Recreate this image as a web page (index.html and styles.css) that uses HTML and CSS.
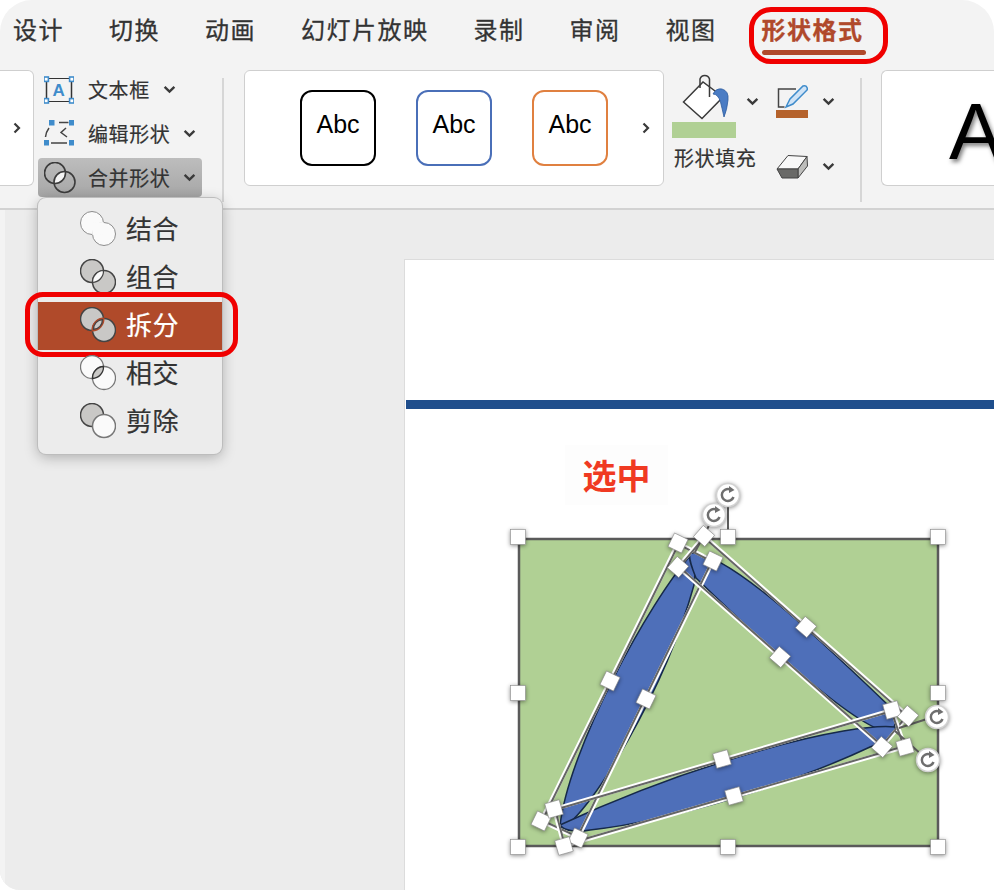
FILE: index.html
```html
<!DOCTYPE html>
<html lang="zh-CN">
<head>
    <meta charset="UTF-8">
    <title>形状格式</title>
    <link rel="stylesheet" href="styles.css">
</head>
<body>

<svg class="defs" width="0" height="0">
    <defs>
        <symbol id="chev" viewBox="0 0 12 8"><path d="M1.5 1.5 L6 6 L10.5 1.5" fill="none" stroke="#3a3a3a" stroke-width="2.2"/></symbol>
        <symbol id="chev-r" viewBox="0 0 8 12"><path d="M1.5 1.5 L6 6 L1.5 10.5" fill="none" stroke="#3a3a3a" stroke-width="2.2"/></symbol>
        <g id="sq"><rect x="-7.5" y="-7.5" width="15" height="15" fill="#fff" stroke="#8a8a8a" stroke-width=".6"/></g>
        <g id="rot">
            <circle r="11.5" fill="#fff" stroke="#d2d2d2" stroke-width="1.5"/>
            <path d="M5.5 2 A6 6 0 1 1 2 -5.6" fill="none" stroke="#6e6e6e" stroke-width="2.5"/>
            <path d="M1 -9 L6.5 -5 L1 -2 Z" fill="#6e6e6e"/>
        </g>
        <path id="lens" d="M12.51 23.48 A11.5 11.5 0 0 1 23.49 11.52 A11.5 11.5 0 0 1 12.51 23.48 Z"/>
    </defs>
</svg>

<div class="window">
    <nav class="tabs">
        <div class="tab">设计</div>
        <div class="tab">切换</div>
        <div class="tab">动画</div>
        <div class="tab">幻灯片放映</div>
        <div class="tab">录制</div>
        <div class="tab">审阅</div>
        <div class="tab">视图</div>
        <div class="tab active">形状格式</div>
    </nav>

    <div class="ribbon">
        <div class="card left-card">
            <svg class="chev-r"><use href="#chev-r"/></svg>
        </div>

        <div class="tools">
            <div class="tool">
                <svg class="tool-icon" viewBox="45 75 30 30">
                    <path d="M47.5 79 V101 M72.5 79 V101" stroke="#333" stroke-width="1.5"/>
                    <path d="M47 78.5 H73 M47 101.5 H73" stroke="#333" stroke-width="1"/>
                    <g fill="#fff" stroke="#3f8ccb" stroke-width="1.6">
                        <rect x="45" y="77" width="4.4" height="4.4"/>
                        <rect x="70.6" y="77" width="4.4" height="4.4"/>
                        <rect x="45" y="98.6" width="4.4" height="4.4"/>
                        <rect x="70.6" y="98.6" width="4.4" height="4.4"/>
                    </g>
                    <text x="60" y="96" text-anchor="middle" class="icon-a">A</text>
                </svg>
                <span>文本框</span>
                <svg class="chev"><use href="#chev"/></svg>
            </div>
            <div class="tool">
                <svg class="tool-icon" viewBox="45 119 30 30">
                    <g fill="#3f8ccb">
                        <rect x="50" y="120" width="5.5" height="5.5"/>
                        <rect x="70" y="120" width="5.5" height="5.5"/>
                        <rect x="44.5" y="140" width="5.5" height="5.5"/>
                        <rect x="70" y="140" width="5.5" height="5.5"/>
                    </g>
                    <path d="M60 122.5 H69.500 M67 128 L62 132.500 L68 137 M52 143 H68 M46.500 137 Q47 132 50 128" fill="none" stroke="#444" stroke-width="1.5"/>
                </svg>
                <span>编辑形状</span>
                <svg class="chev"><use href="#chev"/></svg>
            </div>
            <div class="tool selected">
                <svg class="tool-icon merge-icon" viewBox="0 0 32 32">
                    <path d="M10.1 21.46 A10.5 10.5 0 0 1 21.4 9.54 A10.5 10.5 0 0 1 10.1 21.46 Z" fill="#f4f4f4"/>
                    <circle cx="11" cy="11" r="10.500" fill="none" stroke="#3c3c3c" stroke-width="1.600"/>
                    <circle cx="20.500" cy="20" r="10.500" fill="none" stroke="#3c3c3c" stroke-width="1.600"/>
                </svg>
                <span>合并形状</span>
                <svg class="chev"><use href="#chev"/></svg>

                <div class="menu">
                    <div class="menu-item">
                        <svg class="menu-icon" viewBox="0 0 36 36">
                            <circle cx="12" cy="12" r="11.500" fill="#fafafa" stroke="#8c8c8c"/>
                            <circle cx="24" cy="23" r="11.500" fill="#fafafa" stroke="#8c8c8c"/>
                            <use href="#lens" fill="#fafafa"/>
                            <path d="M12 18 L24 17" stroke="#fafafa" stroke-width="12"/>
                        </svg>
                        <span>结合</span>
                    </div>
                    <div class="menu-item">
                        <svg class="menu-icon" viewBox="0 0 36 36">
                            <circle cx="12" cy="12" r="11.500" fill="#c9c8c6" stroke="#444" stroke-width="1.500"/>
                            <circle cx="24" cy="23" r="11.500" fill="#c9c8c6" stroke="#444" stroke-width="1.500"/>
                            <use href="#lens" fill="#fafafa" stroke="#444" stroke-width="1.200"/>
                        </svg>
                        <span>组合</span>
                    </div>
                    <div class="menu-item current">
                        <svg class="menu-icon" viewBox="0 0 36 36">
                            <circle cx="12" cy="12" r="11.500" fill="#c9c8c6" stroke="#444" stroke-width="1.500"/>
                            <circle cx="24" cy="23" r="11.500" fill="#c9c8c6" stroke="#444" stroke-width="1.500"/>
                            <use href="#lens" fill="#b04a2a" stroke="#b04a2a" stroke-width="2"/>
                            <use href="#lens" transform="translate(18 17.500) scale(.8) translate(-18 -17.500)" fill="#c9c8c6" stroke="#444" stroke-width="1.600"/>
                        </svg>
                        <span>拆分</span>
                    </div>
                    <div class="menu-item">
                        <svg class="menu-icon" viewBox="0 0 36 36">
                            <circle cx="12" cy="12" r="11.500" fill="#fafafa" stroke="#777" stroke-width="1.300"/>
                            <circle cx="24" cy="23" r="11.500" fill="#fafafa" stroke="#777" stroke-width="1.300"/>
                            <use href="#lens" fill="#c9c8c6" stroke="#333" stroke-width="1.300"/>
                        </svg>
                        <span>相交</span>
                    </div>
                    <div class="menu-item">
                        <svg class="menu-icon" viewBox="0 0 36 36">
                            <circle cx="12" cy="12" r="11.500" fill="#c9c8c6" stroke="#444" stroke-width="1.500"/>
                            <circle cx="24" cy="23" r="11.500" fill="#fafafa" stroke="#777" stroke-width="1.500"/>
                        </svg>
                        <span>剪除</span>
                    </div>
                </div>
            </div>
        </div>

        <div class="sep sep-a"></div>

        <div class="card gallery">
            <div class="abc abc-black">Abc</div>
            <div class="abc abc-blue">Abc</div>
            <div class="abc abc-orange">Abc</div>
            <svg class="chev-r gallery-next"><use href="#chev-r"/></svg>
        </div>

        <div class="fill">
            <div class="fill-top">
                <svg class="bucket" viewBox="680 72 50 48">
                    <path d="M683.500 102 L703 82 L723 97 L702 118.500 Z" fill="#fff" stroke="#3a3a3a" stroke-width="1.500"/>
                    <path d="M700 88 V79 A5 5 0 0 1 709.500 79 V97" fill="none" stroke="#3a3a3a" stroke-width="1.500"/>
                    <path d="M713 94 Q716 88 722 89 Q729 91 728 100 Q727 110 724 117 Q722 108 720.500 102 Q718 94 713 94 Z" fill="#4a7cc4" stroke="#2d5c9e" stroke-width=".8"/>
                </svg>
                <svg class="chev"><use href="#chev"/></svg>
            </div>
            <div class="swatch-green"></div>
            <div class="fill-label">形状填充</div>
        </div>

        <div class="pen-col">
            <div class="pen-row">
                <svg class="pen" viewBox="776 84 32 34">
                    <path d="M784.500 107 H778.500 V89 H796" fill="none" stroke="#444" stroke-width="1.500"/>
                    <path d="M786 107 L790 99 L803 86 Q806 85 807 87.500 Q808 90 806 91 L793 104 Z" fill="#cfe3f6" stroke="#3f8ccb" stroke-width="1.500"/>
                    <rect x="776" y="110" width="32" height="8" fill="#b5622b"/>
                </svg>
                <svg class="chev"><use href="#chev"/></svg>
            </div>
            <div class="pen-row">
                <svg class="pen" viewBox="776 152 32 27">
                    <path d="M777 168 L788 154.500 L807 155.500 L798 168 Z" fill="#f8f8f8" stroke="#444" stroke-width="1"/>
                    <path d="M798 168 L807 155.500 L807.500 165 L798 177 Z" fill="#bdbdbb" stroke="#444" stroke-width="1"/>
                    <path d="M777 168 H798 V177 H782 Z" fill="#6a6a68" stroke="#444" stroke-width="1"/>
                </svg>
                <svg class="chev"><use href="#chev"/></svg>
            </div>
        </div>

        <div class="sep sep-b"></div>

        <div class="card big-card">A</div>
    </div>

    <main class="canvas">
        <div class="slide">
            <div class="title-bar"></div>
            <div class="pick-label">选中</div>

            <svg class="diagram" viewBox="404 259 590 631">
                <rect x="519" y="539" width="419" height="307" fill="#b0d094" stroke="#5a5a5a" stroke-width="2.500"/>

                <g fill="#4e6fb9" stroke="#16294a" stroke-width="1.500">
                    <path d="M691 555 C650 600 568 750 560 826 L562 828 C590 815 665 690 694 585 C696 572 694 560 691 555 Z"/>
                    <path d="M690 553 C725 550 810 630 888 705 C897 715 897 728 890 732 C860 732 760 640 696 578 C692 568 688 558 690 553 Z"/>
                    <path d="M895 727 C850 722 700 760 560 825 C565 832 580 832 590 830 C680 820 800 780 870 747 C885 742 897 735 895 727 Z"/>
                </g>

                <g fill="none">
                    <polygon points="678,543 713,561 578,838 541,821" stroke="#fff" stroke-width="4"/>
                    <polygon points="678.500,544.300 711.700,561.500 577.500,836.700 542.300,820.500" stroke="#666" stroke-width="2"/>
                    <polygon points="704,536 908,716 882,747 678,567" stroke="#fff" stroke-width="4"/>
                    <polygon points="704.100,537.400 906.600,716.100 881.900,745.600 679.400,566.900" stroke="#666" stroke-width="2"/>
                    <polygon points="892,710 905,747 564,846 554,809" stroke="#fff" stroke-width="4"/>
                    <polygon points="891.300,711.200 903.800,746.300 564.700,844.800 555.200,809.700" stroke="#666" stroke-width="2"/>
                    <path d="M728 537 V506 M695 552 L712 520 M899 728 L930 718 M895 731 L922 755" stroke="#5e5e5e" stroke-width="2"/>
                </g>

                <g class="handles">
                    <use href="#rot" x="728" y="495"/>
                    <use href="#rot" x="714" y="515"/>
                    <use href="#rot" x="937" y="717"/>
                    <use href="#rot" x="928" y="760"/>

                    <use href="#sq" x="518" y="537"/>
                    <use href="#sq" x="728" y="537"/>
                    <use href="#sq" x="938" y="537"/>
                    <use href="#sq" x="518" y="693"/>
                    <use href="#sq" x="938" y="693"/>
                    <use href="#sq" x="518" y="847"/>
                    <use href="#sq" x="728" y="847"/>
                    <use href="#sq" x="938" y="847"/>

                    <use href="#sq" transform="translate(678 543) rotate(26)"/>
                    <use href="#sq" transform="translate(713 561) rotate(26)"/>
                    <use href="#sq" transform="translate(610 681) rotate(26)"/>
                    <use href="#sq" transform="translate(646 699) rotate(26)"/>
                    <use href="#sq" transform="translate(578 838) rotate(26)"/>
                    <use href="#sq" transform="translate(541 821) rotate(26)"/>

                    <use href="#sq" transform="translate(704 536) rotate(41)"/>
                    <use href="#sq" transform="translate(678 567) rotate(41)"/>
                    <use href="#sq" transform="translate(806 627) rotate(41)"/>
                    <use href="#sq" transform="translate(780 657) rotate(41)"/>
                    <use href="#sq" transform="translate(882 747) rotate(41)"/>

                    <use href="#sq" transform="translate(892 710) rotate(-16)"/>
                    <use href="#sq" transform="translate(905 747) rotate(-16)"/>
                    <use href="#sq" transform="translate(908 716) rotate(41)"/>
                    <use href="#sq" transform="translate(722 759) rotate(-16)"/>
                    <use href="#sq" transform="translate(734 796) rotate(-16)"/>
                    <use href="#sq" transform="translate(554 809) rotate(-16)"/>
                    <use href="#sq" transform="translate(564 846) rotate(-16)"/>
                </g>
            </svg>
        </div>
    </main>
</div>

</body>
</html>
```

FILE: styles.css
```css
html, body {
    margin: 0;
    padding: 0;
    background-color: #ffffff;
}
body {
    font-family: "Noto Sans CJK SC", "Liberation Sans", sans-serif;
    color: #333333;
    overflow: hidden;
}
.defs {
    position: absolute;
}
.window {
    width: 994px;
    height: 890px;
    display: flex;
    flex-direction: column;
    background-color: #f3f3f3;
    border-radius: 32px 32px 0 20px;
    overflow: hidden;
}

/* tabs */
.tabs {
    height: 70px;
    box-sizing: border-box;
    padding: 11px 0 0 13px;
    display: flex;
    gap: 45px;
    flex-shrink: 0;
}
.tab {
    font-size: 24px;
    line-height: 36px;
    letter-spacing: 1.5px;
    color: #333333;
    -webkit-text-stroke: 0.3px;
    position: relative;
}
.tab.active {
    color: #b0492b;
    font-weight: 700;
}
.tab.active::before {
    content: "";
    position: absolute;
    left: 0;
    right: -2px;
    top: 39px;
    height: 5px;
    border-radius: 3px;
    background-color: #b0492b;
}
.tab.active::after {
    content: "";
    position: absolute;
    left: -13px;
    right: -24px;
    top: -4px;
    height: 57px;
    box-sizing: border-box;
    border: 5px solid #f00000;
    border-radius: 22px;
}

/* ribbon */
.ribbon {
    height: 140px;
    box-sizing: border-box;
    display: flex;
    align-items: flex-start;
    border-bottom: 2px solid #d2d2d2;
    flex-shrink: 0;
}
.ribbon > * {
    flex-shrink: 0;
}
.card {
    height: 116px;
    box-sizing: border-box;
    background-color: #ffffff;
    border: 1px solid #cfcfcf;
    border-radius: 6px;
    display: flex;
    align-items: center;
}
.left-card {
    width: 34px;
    border-left: none;
    border-radius: 0 6px 6px 0;
    justify-content: flex-end;
    padding-right: 12px;
}
.chev-r {
    width: 8px;
    height: 12px;
    flex-shrink: 0;
}
.chev {
    width: 13px;
    height: 9px;
    flex-shrink: 0;
}
.tools {
    width: 164px;
    margin-left: 4px;
    display: flex;
    flex-direction: column;
    gap: 5px;
}
.tool {
    height: 39px;
    display: flex;
    align-items: center;
    padding-left: 6px;
    font-size: 20px;
    letter-spacing: 0.6px;
    -webkit-text-stroke: 0.2px;
    border-radius: 4px;
    position: relative;
}
.tool span {
    margin-left: 14px;
}
.tool .chev {
    margin-left: 13px;
}
.tool-icon {
    width: 30px;
    height: 30px;
    flex-shrink: 0;
}
.merge-icon {
    width: 32px;
    height: 32px;
    margin-right: -2px;
}
.icon-a {
    font-family: "Liberation Sans", sans-serif;
    font-size: 17px;
    font-weight: 700;
    fill: #3f8ccb;
}
.tool.selected {
    background: linear-gradient(#bdbdbd, #a6a6a6);
}

/* dropdown */
.menu {
    position: absolute;
    left: 0;
    top: 40px;
    width: 184px;
    box-sizing: border-box;
    padding: 8px 0;
    background-color: #ececec;
    border-radius: 8px;
    box-shadow: 0 0 0 1px #bdbdbd, 0 3px 14px rgba(0, 0, 0, 0.28);
    z-index: 5;
}
.menu-item {
    height: 48px;
    display: flex;
    align-items: center;
    padding-left: 42px;
    font-size: 26px;
    letter-spacing: 0.4px;
    position: relative;
}
.menu-item span {
    margin: 0 0 6px 10px;
    color: #333333;
}
.menu-icon {
    width: 36px;
    height: 36px;
    margin-top: -2px;
    flex-shrink: 0;
}
.menu-item.current {
    background-color: #b04a2a;
}
.menu-item.current span {
    color: #ffffff;
}
.menu-item.current::after {
    content: "";
    position: absolute;
    left: -13px;
    right: -16px;
    top: -10px;
    bottom: -7px;
    border: 5px solid #f00000;
    border-radius: 18px;
}

.sep {
    width: 2px;
    height: 124px;
    margin-top: 8px;
    background-color: #d6d6d6;
}
.sep-a {
    margin-left: 20px;
}
.sep-b {
    margin-left: 25px;
}

/* shape styles */
.gallery {
    width: 420px;
    margin-left: 20px;
    padding-left: 55px;
    gap: 40px;
}
.abc {
    width: 76px;
    height: 76px;
    box-sizing: border-box;
    border-radius: 12px;
    border: 2px solid #000000;
    background-color: #ffffff;
    font-family: "Liberation Sans", sans-serif;
    font-size: 25px;
    color: #000000;
    display: flex;
    justify-content: center;
    padding-top: 18px;
}
.abc-blue {
    border-color: #4a6fb8;
}
.abc-orange {
    border-color: #e08040;
}
.gallery-next {
    margin-left: -6px;
}
.fill {
    width: 90px;
    margin-left: 8px;
}
.fill-top {
    height: 52px;
    display: flex;
    align-items: center;
    padding-left: 8px;
}
.bucket {
    width: 50px;
    height: 48px;
    flex-shrink: 0;
}
.fill-top .chev {
    margin: 10px 0 0 16px;
}
.swatch-green {
    width: 64px;
    height: 16px;
    background-color: #b0d094;
}
.fill-label {
    margin: 6px 0 0 2px;
    font-size: 20px;
    line-height: 28px;
    letter-spacing: 0.6px;
    -webkit-text-stroke: 0.2px;
    white-space: nowrap;
}
.pen-col {
    margin: 14px 0 0 14px;
    display: flex;
    flex-direction: column;
    gap: 35px;
}
.pen-row {
    display: flex;
    align-items: center;
}
.pen {
    width: 32px;
    flex-shrink: 0;
}
.pen-row:first-child .pen {
    height: 34px;
}
.pen-row:last-child .pen {
    height: 27px;
}
.pen-row .chev {
    margin-left: 14px;
}
.big-card {
    width: 130px;
    margin-left: 19px;
    padding: 8px 0 0 67px;
    font-family: "Liberation Sans", sans-serif;
    font-size: 80px;
    color: #000000;
    text-shadow: 2px 3px 4px rgba(0, 0, 0, 0.5);
    border-right: none;
}

/* canvas */
.canvas {
    flex: 1;
    min-height: 0;
    padding: 49px 0 0 399px;
    background-color: #ececec;
    border-left: 5px solid #f3f3f3;
}
.slide {
    height: 100%;
    background-color: #ffffff;
    border-top: 1px solid #dcdcdc;
    border-left: 1px solid #dcdcdc;
    padding: 140px 0 0 1px;
    box-sizing: border-box;
    position: relative;
}
.title-bar {
    height: 9px;
    background-color: #1f4e8c;
}
.pick-label {
    position: absolute;
    left: 160px;
    top: 185px;
    width: 103px;
    height: 60px;
    background-color: #fdfdfd;
    text-align: center;
    font-size: 34px;
    line-height: 60px;
    font-weight: 700;
    color: #f03a22;
}
.diagram {
    position: absolute;
    left: -1px;
    top: -1px;
    width: 590px;
    height: 631px;
    overflow: visible;
}
.handles {
    filter: drop-shadow(0 1px 2px rgba(0, 0, 0, 0.45));
}
```
